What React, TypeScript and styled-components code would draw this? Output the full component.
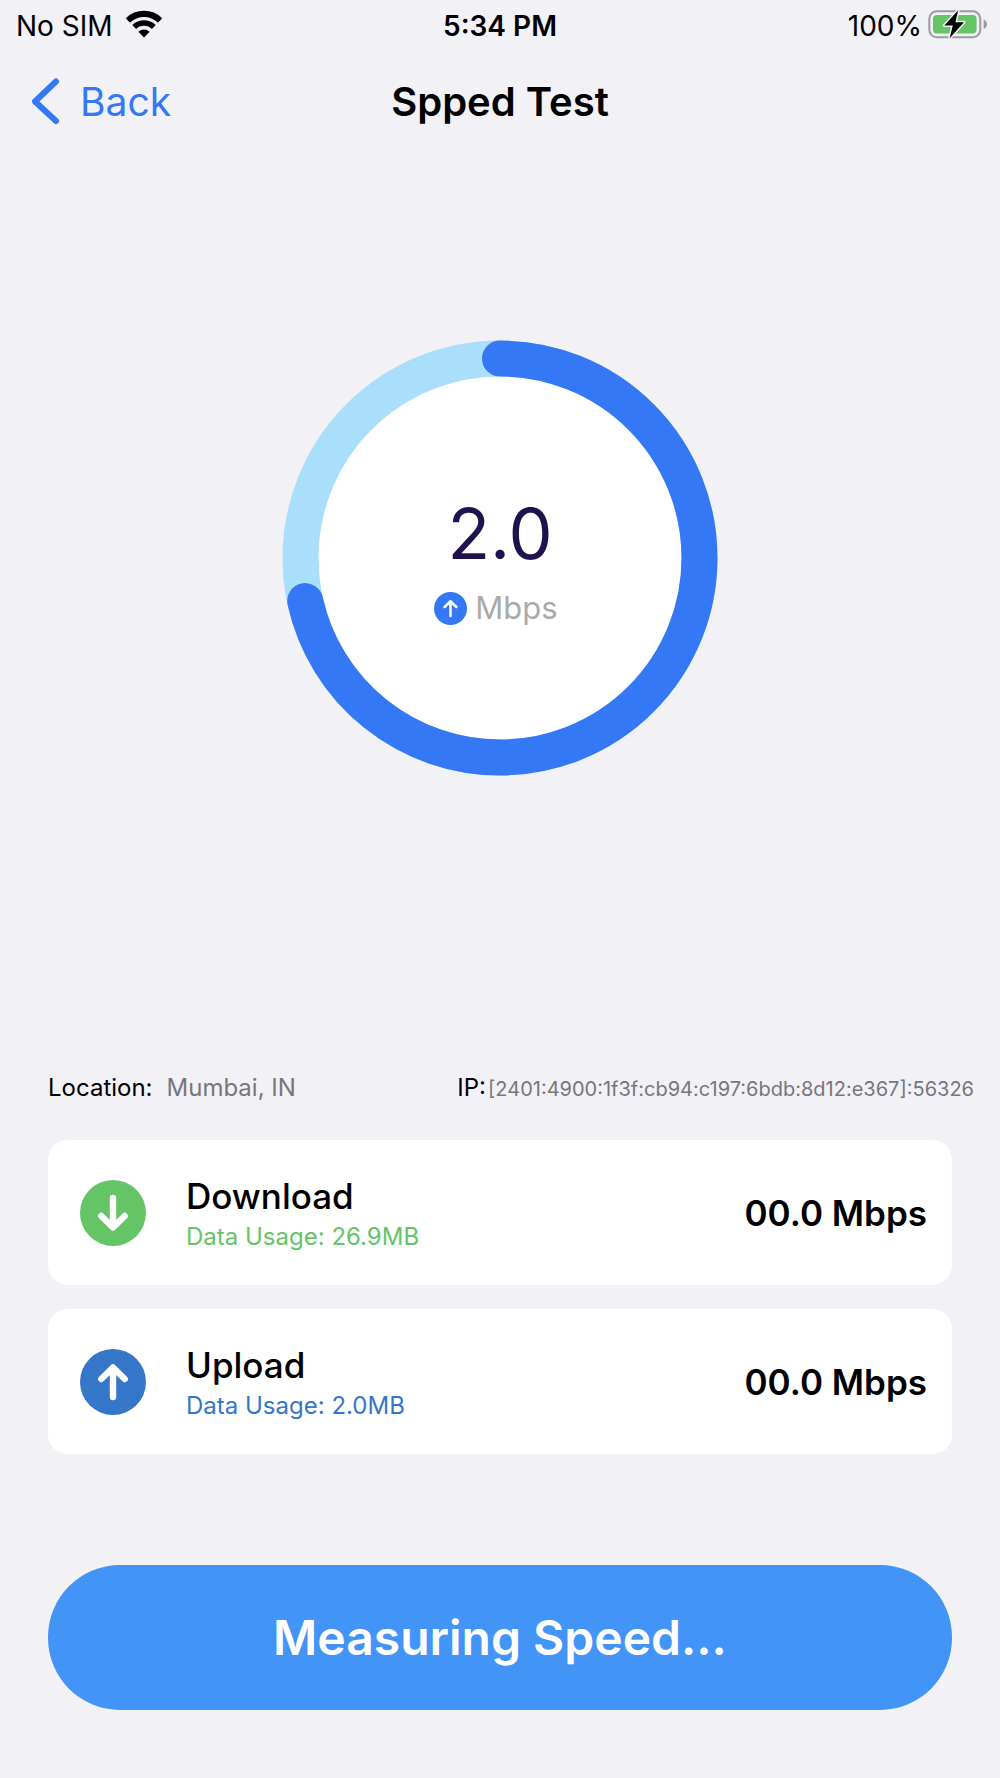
import React from "react";
import styled, { createGlobalStyle } from "styled-components";

const GlobalStyle = createGlobalStyle`
  *, *::before, *::after { box-sizing: border-box; }
  body {
    margin: 0;
    background: #f2f1f6;
    color: #000;
    font-family: Inter, "Liberation Sans", sans-serif;
  }
  h1, h2, p, dl, dd { margin: 0; font-weight: inherit; font-size: inherit; }
  svg { display: block; flex: none; }
`;

const Screen = styled.div`
  min-height: 100vh;
  display: flex;
  flex-direction: column;
  padding-bottom: 68px;
`;

const StatusBar = styled.header`
  display: grid;
  grid-template-columns: 1fr auto 1fr;
  align-items: center;
  height: 50px;
  padding: 0 12px;
  font-size: 28px;
  line-height: 32px;
`;

const StatusGroup = styled.div<{ $end?: boolean }>`
  display: flex;
  align-items: center;
  justify-content: ${(p) => (p.$end ? "flex-end" : "flex-start")};
  gap: ${(p) => (p.$end ? 6 : 12)}px;
  padding-left: 4px;

  svg { margin-bottom: 2px; }
`;

const StatusText = styled.span`
  padding-top: 2px;
`;

const Clock = styled.time`
  padding-top: 2px;
  font-weight: 600;
`;

const NavBar = styled.nav`
  display: grid;
  grid-template-columns: 1fr auto 1fr;
  align-items: center;
  height: 104px;
  padding: 0 30px;
`;

const BackButton = styled.button`
  justify-self: start;
  display: flex;
  align-items: center;
  gap: 18px;
  padding: 0;
  border: 0;
  background: none;
  color: #3478f6;
  font: inherit;
  font-size: 39px;
  line-height: 48px;
  cursor: pointer;
`;

const Title = styled.h1`
  && {
    font-size: 40px;
    font-weight: 600;
  }
  line-height: 48px;
`;

const Main = styled.main`
  flex: 1;
  display: flex;
  flex-direction: column;
`;

const GaugeArea = styled.section`
  flex: 1;
  display: flex;
  align-items: center;
  justify-content: center;
  padding-bottom: 74px;
`;

const Gauge = styled.div`
  display: grid;
  place-items: center;
  > * { grid-area: 1 / 1; }
`;

const Reading = styled.div`
  display: flex;
  flex-direction: column;
  align-items: center;
  gap: 14px;
  padding-top: 6px;
`;

const ReadingValue = styled.p`
  color: #20124d;
  && { font-size: 70px; }
  line-height: 80px;
`;

const ReadingUnit = styled.p`
  display: flex;
  align-items: center;
  gap: 8px;
  padding-right: 8px;
  color: #aaa;
  && { font-size: 31px; }
  line-height: 40px;
`;

const ConnectionInfo = styled.dl`
  display: flex;
  align-items: center;
  justify-content: space-between;
  height: 104px;
  padding: 0 26px 0 48px;
  font-size: 24px;
  line-height: 32px;
`;

const InfoItem = styled.div<{ $gap: number }>`
  display: flex;
  align-items: baseline;
  gap: ${(p) => p.$gap}px;
`;

const InfoValue = styled.dd<{ $small?: boolean }>`
  && { font-size: ${(p) => (p.$small ? 20 : 24)}px; }
  color: #76767c;
`;

const Results = styled.section`
  display: flex;
  flex-direction: column;
  gap: 24px;
  padding: 0 48px;
`;

const Card = styled.article`
  display: flex;
  align-items: center;
  gap: 40px;
  height: 145px;
  padding: 0 25px 0 32px;
  border-radius: 20px;
  background: #fff;
`;

const CardText = styled.div`
  flex: 1;
  padding-top: 4px;
`;

const CardTitle = styled.h2`
  && {
    font-size: 35px;
    font-weight: 500;
  }
  line-height: 44px;
`;

const Usage = styled.p<{ $color: string }>`
  color: ${(p) => p.$color};
  && { font-size: 24px; }
  line-height: 38px;
`;

const Speed = styled.p`
  && {
    font-size: 35px;
    font-weight: 600;
  }
  line-height: 44px;
`;

const MeasureButton = styled.button`
  height: 145px;
  margin: 111px 48px 0;
  border: 0;
  border-radius: 72px;
  background: #4294f7;
  color: #fff;
  font: inherit;
  font-size: 48px;
  font-weight: 600;
  line-height: 60px;
  cursor: pointer;
`;

function WifiIcon() {
  return (
    <svg width="38" height="28" viewBox="0 0 38 28" aria-hidden="true">
      <g fill="none" stroke="#000">
        <path d="M2.9 10.4A23.2 23.2 0 0 1 35.1 10.4" strokeWidth="6.2" />
        <path d="M9.2 16.9A14.3 14.3 0 0 1 28.8 16.9" strokeWidth="5.5" />
      </g>
      <path d="M19 27.5L13.4 21.8A8 8 0 0 1 24.6 21.8Z" />
    </svg>
  );
}

function BatteryIcon() {
  return (
    <svg width="60" height="30" viewBox="0 0 60 30" aria-hidden="true">
      <rect x="1.3" y="2.3" width="51" height="26" rx="7.5" fill="none" stroke="#9b9b9f" strokeWidth="2" />
      <rect x="5" y="6" width="43.6" height="18.6" rx="4" fill="#65c466" />
      <path d="M55.6 10.6Q59 12 59 15.3T55.6 20Z" fill="#9b9b9f" />
      <path
        d="M30.2 1.3L16.3 16.4H24.8L21.6 29.2L36 13.2H27.4Z"
        fill="#000"
        stroke="#f2f1f6"
        strokeWidth="3"
        strokeLinejoin="round"
        paintOrder="stroke"
      />
    </svg>
  );
}

function ChevronIcon() {
  return (
    <svg width="32" height="48" viewBox="0 0 32 48" fill="none" aria-hidden="true">
      <path d="M26 3.5L5 23.5L26 43" stroke="currentColor" strokeWidth="6" strokeLinecap="round" strokeLinejoin="round" />
    </svg>
  );
}

type ArrowProps = { size: number; color: string; stroke: number; down?: boolean };

function ArrowBadge({ size, color, stroke, down }: ArrowProps) {
  return (
    <svg width={size} height={size} viewBox="0 0 66 66" fill="none" aria-hidden="true">
      <circle cx="33" cy="33" r="33" fill={color} />
      <path
        d={down ? "M33 18V47M21.3 36L33 47.5L44.7 36" : "M33 48V19M21.3 30L33 18.5L44.7 30"}
        stroke="#fff"
        strokeWidth={stroke}
        strokeLinecap="round"
        strokeLinejoin="round"
      />
    </svg>
  );
}

function ProgressRing({ progress }: { progress: number }) {
  const radius = 199.5;
  const length = 2 * Math.PI * radius;
  return (
    <svg width="436" height="436" viewBox="0 0 436 436" fill="none" aria-hidden="true">
      <circle cx="218" cy="218" r={radius} fill="#fff" stroke="#aadffb" strokeWidth="36" />
      <circle
        cx="218"
        cy="218"
        r={radius}
        stroke="#3478f6"
        strokeWidth="36"
        strokeLinecap="round"
        strokeDasharray={`${length * progress} ${length}`}
        transform="rotate(-90 218 218)"
      />
    </svg>
  );
}

const results = [
  { name: "Download", usage: "26.9MB", speed: "00.0 Mbps", color: "#65c466", down: true },
  { name: "Upload", usage: "2.0MB", speed: "00.0 Mbps", color: "#3476c8", down: false },
];

export default function App() {
  return (
    <Screen>
      <GlobalStyle />
      <StatusBar>
        <StatusGroup>
          <StatusText>No SIM</StatusText>
          <WifiIcon />
        </StatusGroup>
        <Clock>5:34 PM</Clock>
        <StatusGroup $end>
          <StatusText>100%</StatusText>
          <BatteryIcon />
        </StatusGroup>
      </StatusBar>
      <NavBar>
        <BackButton type="button">
          <ChevronIcon />
          <span>Back</span>
        </BackButton>
        <Title>Spped Test</Title>
      </NavBar>
      <Main>
        <GaugeArea>
          <Gauge>
            <ProgressRing progress={0.715} />
            <Reading>
              <ReadingValue>2.0</ReadingValue>
              <ReadingUnit>
                <ArrowBadge size={33} color="#3478f6" stroke={5} />
                <span>Mbps</span>
              </ReadingUnit>
            </Reading>
          </Gauge>
        </GaugeArea>
        <ConnectionInfo>
          <InfoItem $gap={14}>
            <dt>Location:</dt>
            <InfoValue>Mumbai, IN</InfoValue>
          </InfoItem>
          <InfoItem $gap={2}>
            <dt>IP:</dt>
            <InfoValue $small>[2401:4900:1f3f:cb94:c197:6bdb:8d12:e367]:56326</InfoValue>
          </InfoItem>
        </ConnectionInfo>
        <Results>
          {results.map((r) => (
            <Card key={r.name}>
              <ArrowBadge size={66} color={r.color} stroke={6.4} down={r.down} />
              <CardText>
                <CardTitle>{r.name}</CardTitle>
                <Usage $color={r.color}>Data Usage: {r.usage}</Usage>
              </CardText>
              <Speed>{r.speed}</Speed>
            </Card>
          ))}
        </Results>
        <MeasureButton type="button">Measuring Speed...</MeasureButton>
      </Main>
    </Screen>
  );
}
